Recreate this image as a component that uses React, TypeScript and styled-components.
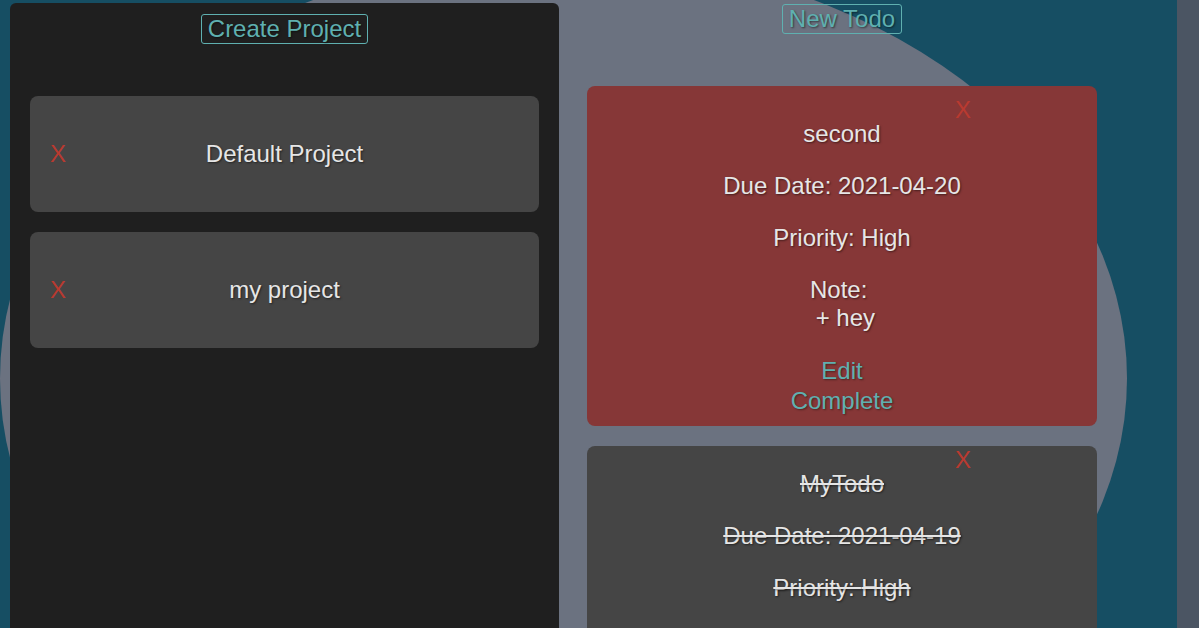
import * as React from "react"
import styled, { createGlobalStyle } from "styled-components"

const GlobalStyle = createGlobalStyle`
  html, body {
    margin: 0;
    padding: 0;
    height: 100%;
    overflow: hidden;
  }
  body {
    font-family: "Liberation Sans", Arial, sans-serif;
  }
`

type Todo = {
  title: string
  due: string
  priority: string
  note?: string
  done: boolean
}

const projects = ["Default Project", "my project"]

const todos: Todo[] = [
  { title: "second", due: "2021-04-20", priority: "High", note: "+ hey", done: false },
  { title: "MyTodo", due: "2021-04-19", priority: "High", note: "", done: true },
]

const App = () => (
  <Page>
    <GlobalStyle />
    <Main>
      <Blob />
      <ProjectPanel>
        <OutlineButton>Create Project</OutlineButton>
        <ProjectList>
          {projects.map((name) => (
            <ProjectCard key={name}>
              <DeleteX>X</DeleteX>
              <ProjectName>{name}</ProjectName>
            </ProjectCard>
          ))}
        </ProjectList>
      </ProjectPanel>
      <TodoColumn>
        <OutlineButton>New Todo</OutlineButton>
        <TodoList>
          {todos.map((t) => (
            <TodoCard key={t.title} done={t.done}>
              <CardClose done={t.done}>X</CardClose>
              <Line done={t.done}>{t.title}</Line>
              <Line done={t.done}>Due Date: {t.due}</Line>
              <Line done={t.done}>Priority: {t.priority}</Line>
              <Line done={t.done}>
                {"Note:\u00a0"}
                <br />
                {"\u00a0" + t.note}
              </Line>
              <LinkButton>Edit</LinkButton>
              <LinkButton>Complete</LinkButton>
            </TodoCard>
          ))}
        </TodoList>
      </TodoColumn>
    </Main>
    <SideStrip />
  </Page>
)

export default App

const Page = styled.div`
  display: flex;
  height: 100vh;
  overflow: hidden;
`
const Main = styled.main`
  position: relative;
  flex: 1;
  display: flex;
  align-items: stretch;
  background: #164e63;
  overflow: hidden;
`
// decorative ellipse behind the columns
const Blob = styled.div`
  position: absolute;
  left: 0;
  top: -44px;
  width: 1127px;
  height: 845px;
  border-radius: 50%;
  background: #6b7280;
`
const SideStrip = styled.aside`
  width: 22px;
  flex-shrink: 0;
  background: #4b5563;
`
const ProjectPanel = styled.section`
  position: relative;
  width: 549px;
  margin: 3px 0 0 10px;
  padding: 11px 20px 0;
  box-sizing: border-box;
  display: flex;
  flex-direction: column;
  align-items: center;
  background: #1f1f1f;
  border-radius: 6px 6px 0 0;
`
const OutlineButton = styled.button`
  font-family: "Liberation Sans", Arial, sans-serif;
  font-size: 24px;
  line-height: 28px;
  padding: 0 6px;
  color: #5fb0b0;
  background: transparent;
  border: 1px solid #5fb0b0;
  border-radius: 3px;
  text-shadow: 1px 1px 2px rgba(0, 0, 0, 0.5);
  cursor: pointer;
`
const ProjectList = styled.div`
  align-self: stretch;
  margin-top: 52px;
  display: flex;
  flex-direction: column;
  gap: 20px;
`
const ProjectCard = styled.div`
  display: grid;
  grid-template-columns: 1fr auto 1fr;
  align-items: center;
  padding: 20px;
  background: #454545;
  border-radius: 8px;
`
const DeleteX = styled.span`
  justify-self: start;
  font-size: 24px;
  color: #b93a30;
  cursor: pointer;
`
const ProjectName = styled.p`
  margin: 24px 0;
  font-size: 24px;
  line-height: 28px;
  color: #e6e6e6;
  text-shadow: 1px 1px 2px rgba(0, 0, 0, 0.5);
`
const TodoColumn = styled.section`
  position: relative;
  width: 566px;
  padding-top: 4px;
  display: flex;
  flex-direction: column;
  align-items: center;
`
const TodoList = styled.div`
  margin-top: 52px;
  display: flex;
  flex-direction: column;
  gap: 20px;
`
const TodoCard = styled.div<{ done: boolean }>`
  position: relative;
  display: flow-root;
  width: 510px;
  padding: ${(p) => (p.done ? "0 0 10px" : "10px 0")};
  box-sizing: border-box;
  text-align: center;
  background: ${(p) => (p.done ? "#454545" : "#863737")};
  border-radius: 8px;
`
const CardClose = styled.span<{ done: boolean }>`
  position: absolute;
  top: ${(p) => (p.done ? "0" : "10px")};
  left: 368px;
  font-size: 24px;
  line-height: 28px;
  color: #b93a30;
  cursor: pointer;
`
const Line = styled.p<{ done: boolean }>`
  margin: 24px 0;
  font-size: 24px;
  line-height: 28px;
  color: #e6e6e6;
  text-shadow: 1px 1px 2px rgba(0, 0, 0, 0.5);
  text-decoration: ${(p) => (p.done ? "line-through" : "none")};
`
const LinkButton = styled.button`
  display: block;
  margin: 0 auto;
  padding: 0;
  height: 30px;
  font-family: "Liberation Sans", Arial, sans-serif;
  font-size: 24px;
  line-height: 30px;
  color: #5fb0b0;
  background: none;
  border: none;
  text-shadow: 1px 1px 2px rgba(0, 0, 0, 0.4);
  cursor: pointer;
`
